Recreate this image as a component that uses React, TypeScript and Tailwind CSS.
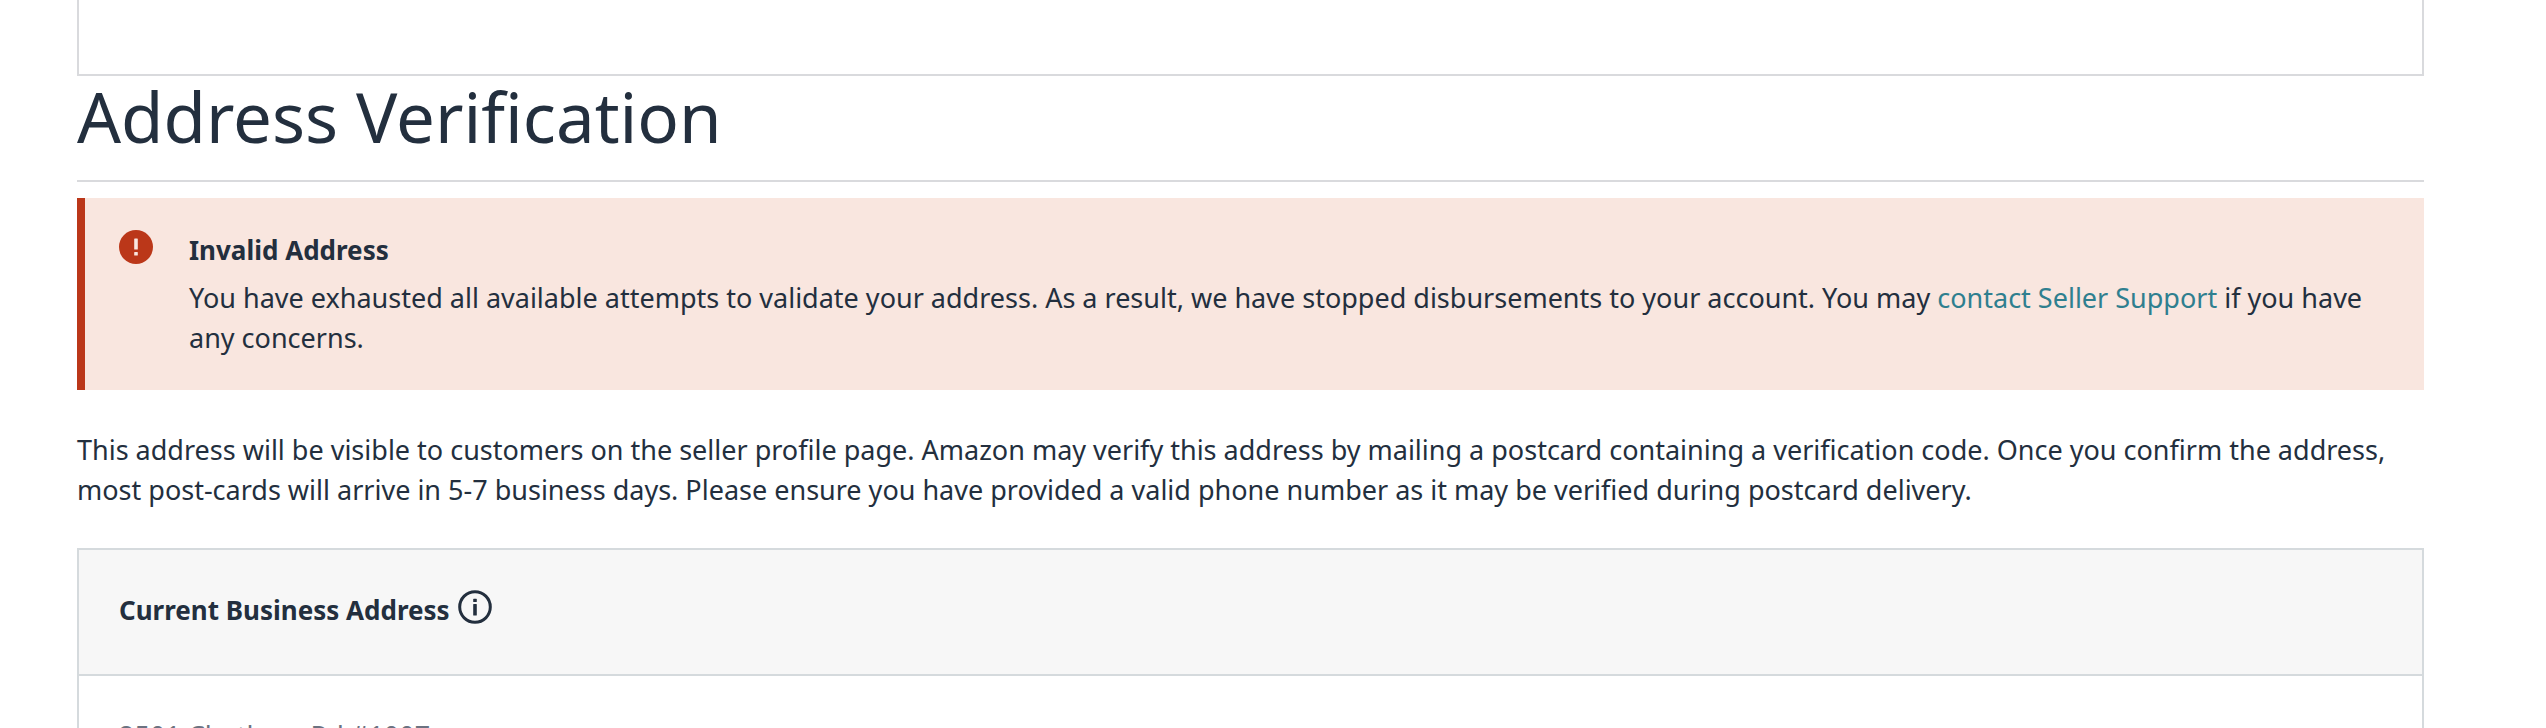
function AlertIcon() {
  return (
    <svg viewBox="0 0 34 34" className="size-[34px] shrink-0" aria-hidden="true">
      <circle cx="17" cy="17" r="17" fill="#bb3719" />
      <rect x="15.2" y="8.5" width="3.6" height="11" rx="0.6" fill="#f9e6df" />
      <rect x="15.2" y="22" width="3.6" height="3.6" rx="0.6" fill="#f9e6df" />
    </svg>
  );
}

function InfoIcon() {
  return (
    <svg viewBox="0 0 34 34" className="size-[34px]" aria-hidden="true">
      <circle cx="17" cy="17" r="15.3" fill="none" stroke="#232f3e" strokeWidth="3" />
      <rect x="15.2" y="8.8" width="3.6" height="3.2" rx="0.6" fill="#232f3e" />
      <rect x="15.2" y="14" width="3.6" height="11.5" rx="0.6" fill="#232f3e" />
    </svg>
  );
}

export default function App() {
  return (
    <main className="h-screen overflow-hidden bg-white pr-[122px] pl-[77px] font-['Noto_Sans',sans-serif] text-[27px] leading-10 text-[#232f3e]">
      {/* End of the previous section */}
      <div className="h-[76px] border-2 border-t-0 border-[#d9dadd]" />

      <h1 className="border-b-2 border-[#d9dadd] pb-6 text-[69px] leading-[80px]">Address Verification</h1>

      <section role="alert" className="mt-4 flex gap-9 border-l-8 border-[#bb3719] bg-[#f9e6df] px-[34px] py-8">
        <AlertIcon />
        <div>
          <h2 className="text-[26px] font-bold">Invalid Address</h2>
          <p className="mt-2">
            You have exhausted all available attempts to validate your address. As a result, we have stopped
            disbursements to your account. You may{" "}
            <a href="#support" className="text-[#2f7f8f]">contact Seller Support</a> if you have any concerns.
          </p>
        </div>
      </section>

      <p className="mt-10">
        This address will be visible to customers on the seller profile page. Amazon may verify this address by mailing a
        postcard containing a verification code. Once you confirm the address, most post-cards will arrive in 5-7
        business days. Please ensure you have provided a valid phone number as it may be verified during postcard
        delivery.
      </p>

      {/* Current address */}
      <section className="mt-[38px] border-2 border-[#d5dadd]">
        <header className="flex items-start gap-2 border-b-2 border-[#d5dadd] bg-[#f7f7f7] px-10 pt-10 pb-11">
          <h2 className="text-[26px] font-bold">Current Business Address</h2>
          <button type="button" aria-label="About the business address">
            <InfoIcon />
          </button>
        </header>
        <address className="px-10 py-10 text-[#6b7280] not-italic">2501 Chatham Rd #1007</address>
      </section>
    </main>
  );
}
